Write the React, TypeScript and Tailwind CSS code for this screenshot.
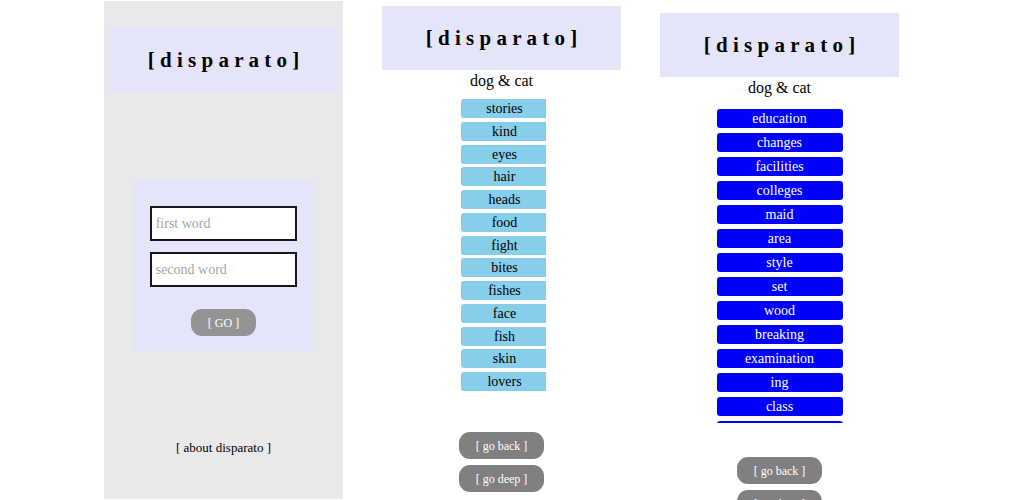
import type { ReactNode } from "react";

const nearWords = [
  "stories", "kind", "eyes", "hair", "heads", "food", "fight",
  "bites", "fishes", "face", "fish", "skin", "lovers",
];

const deepWords = [
  "education", "changes", "facilities", "colleges", "maid", "area", "style",
  "set", "wood", "breaking", "examination", "ing", "class", "room",
];

function Title() {
  return (
    <header className="flex h-16 shrink-0 items-center justify-center bg-[#e5e5f9]">
      <h1 className="whitespace-pre text-[21px] leading-6 font-bold">[ d i s p a r a t o ]</h1>
    </header>
  );
}

function PillButton({ children, wide = false }: { children: ReactNode; wide?: boolean }) {
  return (
    <button
      type="button"
      className={`${wide ? "w-[85px] bg-[#808080]" : "w-[65px] bg-[#949494]"} h-[27px] shrink-0 rounded-[11px] text-xs text-white`}
    >
      {children}
    </button>
  );
}

function Actions() {
  return (
    <div className="mt-auto flex flex-col items-center gap-1.5">
      <PillButton wide>[ go back ]</PillButton>
      <PillButton wide>[ go deep ]</PillButton>
    </div>
  );
}

function WordInput({ label }: { label: string }) {
  return (
    <input
      type="text"
      aria-label={label}
      placeholder={label}
      className="h-[35px] w-full border-2 border-[#16161c] bg-white px-1 text-sm text-black placeholder:text-[#a6a6a6]"
    />
  );
}

export default function App() {
  return (
    <main className="grid h-screen grid-cols-3 gap-[39px] overflow-hidden bg-white pr-[125px] pl-[104px] font-['Liberation_Serif',serif] text-black">
      <section className="mt-px mb-px flex flex-col bg-[#e9e9eb] px-1.5 pt-[27px]">
        <Title />
        <form className="mx-auto mt-[87px] flex w-4/5 flex-col items-center gap-[11px] bg-[#e5e5f9] px-[17px] pt-[27px] pb-[15px]">
          <WordInput label="first word" />
          <WordInput label="second word" />
          <div className="mt-[11px] flex">
            <PillButton>[ GO ]</PillButton>
          </div>
        </form>
        <a href="#about" className="mx-auto mt-auto mb-[42px] text-[13px] leading-[18px]">
          [ about disparato ]
        </a>
      </section>

      <section className="flex min-h-0 flex-col pt-1.5 pb-2">
        <Title />
        <p className="text-center text-base leading-[22px]">dog &amp; cat</p>
        <div className="mt-[7px] flex justify-center pl-[3px]">
          <ul className="flex h-[292px] w-[85px] flex-col justify-between overflow-hidden">
            {nearWords.map((word) => (
              <li key={word} className="h-[19px] w-[88px] rounded-[3px] bg-[#87ceeb] text-center text-sm leading-[19px]">
                {word}
              </li>
            ))}
          </ul>
        </div>
        <Actions />
      </section>

      <section className="flex min-h-0 flex-col pt-[13px]">
        <Title />
        <p className="text-center text-base leading-[22px]">dog &amp; cat</p>
        <ul className="mx-auto mt-2.5 mb-[34px] flex h-[314px] w-[126px] shrink-0 flex-col gap-[5px] overflow-hidden">
          {deepWords.map((word) => (
            <li key={word} className="h-[19px] shrink-0 rounded-[3px] bg-[#0000ff] text-center text-sm leading-[19px] text-white">
              {word}
            </li>
          ))}
        </ul>
        <Actions />
      </section>
    </main>
  );
}
